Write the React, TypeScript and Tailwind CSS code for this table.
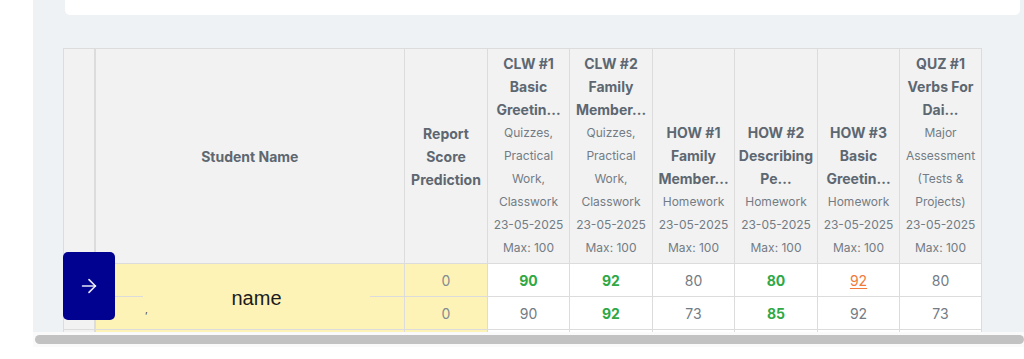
import { ArrowRight } from 'lucide-react';

type Col = { title: string[]; sub: string[] };

const cols: Col[] = [
  { title: ['CLW #1', 'Basic', 'Greetin...'], sub: ['Quizzes,', 'Practical', 'Work,', 'Classwork'] },
  { title: ['CLW #2', 'Family', 'Member...'], sub: ['Quizzes,', 'Practical', 'Work,', 'Classwork'] },
  { title: ['HOW #1', 'Family', 'Member...'], sub: ['Homework'] },
  { title: ['HOW #2', 'Describing', 'Pe...'], sub: ['Homework'] },
  { title: ['HOW #3', 'Basic', 'Greetin...'], sub: ['Homework'] },
  { title: ['QUZ #1', 'Verbs For', 'Dai...'], sub: ['Major', 'Assessment', '(Tests &', 'Projects)'] },
];

type Score = { v: string; tone: 'green' | 'gray' | 'orange' };

const rows: { prediction: string; scores: Score[] }[] = [
  {
    prediction: '0',
    scores: [
      { v: '90', tone: 'green' },
      { v: '92', tone: 'green' },
      { v: '80', tone: 'gray' },
      { v: '80', tone: 'green' },
      { v: '92', tone: 'orange' },
      { v: '80', tone: 'gray' },
    ],
  },
  {
    prediction: '0',
    scores: [
      { v: '90', tone: 'gray' },
      { v: '92', tone: 'green' },
      { v: '73', tone: 'gray' },
      { v: '85', tone: 'green' },
      { v: '92', tone: 'gray' },
      { v: '73', tone: 'gray' },
    ],
  },
];

const toneClass = {
  green: 'font-bold text-[#2fa845]',
  gray: 'text-[#737b84]',
  orange: 'text-[#f0793c] underline underline-offset-2',
};

export default function App() {
  return (
    <div className="flex w-[1024px] h-[359px] overflow-hidden bg-white font-['Inter',sans-serif]">
      <div className="w-[33px] shrink-0" />

      <div className="flex flex-col flex-1 min-w-0">
        {/* Page area */}
        <div className="h-[332px] overflow-hidden bg-[#eef2f4]">
          <div className="h-[15px] ml-[32px] mr-[4px] bg-white rounded-b-[5px]" />

          {/* Grade table */}
          <div className="relative mt-[33px] ml-[30px] w-[918px]">
            <table className="table-fixed border-collapse w-[918px] text-center">
              <colgroup>
                <col className="w-[31px]" />
                <col className="w-[310px]" />
                <col className="w-[83px]" />
                <col className="w-[82px]" />
                <col className="w-[83px]" />
                <col className="w-[82px]" />
                <col className="w-[83px]" />
                <col className="w-[82px]" />
                <col className="w-[82px]" />
              </colgroup>
              <thead>
                <tr className="h-[215px] bg-[#f2f2f2] text-[#5d6771]">
                  <th className="border border-[#dcdcdc] border-r-2" />
                  <th className="border border-[#dcdcdc] align-middle text-[14px] font-bold">Student Name</th>
                  <th className="border border-[#dcdcdc] align-middle text-[14px] font-bold leading-[23px]">
                    <div>Report</div>
                    <div>Score</div>
                    <div>Prediction</div>
                  </th>
                  {cols.map((c, i) => (
                    <th key={i} className="border border-[#dcdcdc] align-bottom pb-[4px] px-0 whitespace-nowrap">
                      {c.title.map((t) => (
                        <div key={t} className="text-[14px] font-bold leading-[23px]">{t}</div>
                      ))}
                      {c.sub.map((s) => (
                        <div key={s} className="text-[12px] font-normal leading-[23px] text-[#737c85]">{s}</div>
                      ))}
                      <div className="text-[12px] font-normal leading-[23px] text-[#737c85]">23-05-2025</div>
                      <div className="text-[12px] font-normal leading-[23px] text-[#737c85]">Max: 100</div>
                    </th>
                  ))}
                </tr>
              </thead>
              <tbody>
                {rows.map((r, i) => (
                  <tr key={i} className="h-[33px] text-[14px]">
                    <td className="border border-[#dcdcdc] border-r-2 bg-[#f2f2f2]" />
                    <td className="border border-[#dcdcdc] bg-[#fdf3b6]" />
                    <td className="border border-[#dcdcdc] bg-[#fdf3b6] text-[#838b93]">{r.prediction}</td>
                    {r.scores.map((s, j) => (
                      <td key={j} className="border border-[#dcdcdc] bg-white">
                        <span className={toneClass[s.tone]}>{s.v}</span>
                      </td>
                    ))}
                  </tr>
                ))}
                <tr className="h-[33px]">
                  <td className="border border-[#dcdcdc] border-r-2 bg-[#f2f2f2]" />
                  <td className="border border-[#dcdcdc] bg-[#fdf3b6]" />
                  <td className="border border-[#dcdcdc] bg-[#fdf3b6]" />
                  {cols.map((_, j) => (
                    <td key={j} className="border border-[#dcdcdc] bg-white" />
                  ))}
                </tr>
              </tbody>
            </table>

            {/* Name patch over the merged student cell */}
            <div className="absolute left-[80px] top-[216px] w-[227px] h-[64px] pt-[4px] bg-[#fdf3b6] flex items-center justify-center">
              <span className="font-['Liberation_Sans',sans-serif] text-[20px] text-[#1c1c1c]">name</span>
              <span className="absolute left-[2px] top-[40px] text-[10px] leading-none text-[#444]">,</span>
            </div>

            {/* Open student button */}
            <button className="absolute left-0 top-[204px] w-[52px] h-[68px] rounded-[5px] bg-[#020290] flex items-center justify-center">
              <ArrowRight className="size-[22px] text-white/90" strokeWidth={1.8} />
            </button>
          </div>
        </div>

        {/* Horizontal scrollbar */}
        <div className="pt-[3px] pl-[2px] bg-[#fafafa] h-[15px]">
          <div className="h-[9px] rounded-full bg-[#c2c2c2]" />
        </div>
      </div>
    </div>
  );
}
